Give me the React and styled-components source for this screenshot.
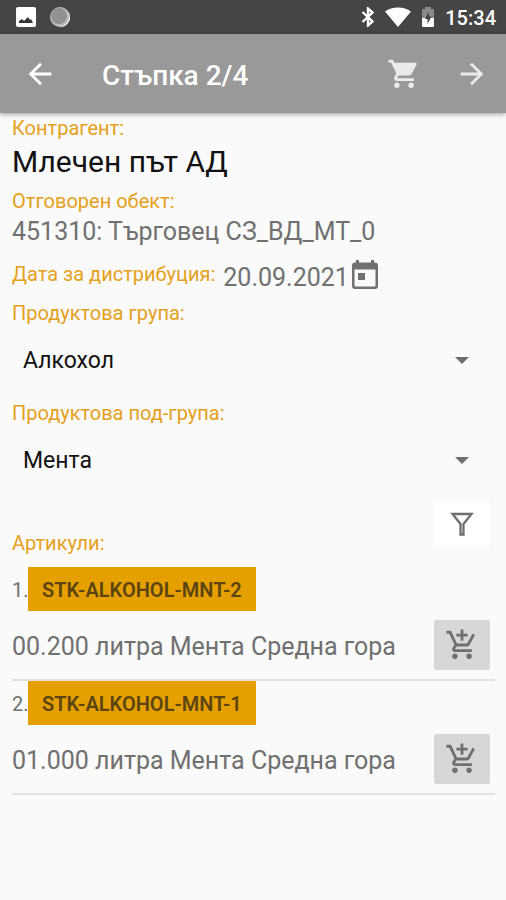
import React, { useState } from "react";
import styled, { createGlobalStyle } from "styled-components";
import {
  MdAddShoppingCart,
  MdArrowBack,
  MdArrowForward,
  MdShoppingCart,
} from "react-icons/md";

const groups = ["Алкохол"];
const subGroups = ["Мента"];

const articles = [
  { code: "STK-ALKOHOL-MNT-2", name: "00.200 литра Мента Средна гора" },
  { code: "STK-ALKOHOL-MNT-1", name: "01.000 литра Мента Средна гора" },
];

const Spinner = ({ id, label, options }) => {
  const [value, setValue] = useState(options[0]);

  return (
    <>
      <Label as="label" htmlFor={id}>
        {label}
      </Label>
      <SelectWrap>
        <Select id={id} value={value} onChange={(e) => setValue(e.target.value)}>
          {options.map((option) => (
            <option key={option}>{option}</option>
          ))}
        </Select>
        <Caret viewBox="0 0 14 7" aria-hidden="true">
          <path d="M0 0h14L7 7z" />
        </Caret>
      </SelectWrap>
    </>
  );
};

const App = () => {
  const [date, setDate] = useState("20.09.2021");

  return (
    <>
      <GlobalStyle />
      <StatusBar>
        <StatusGroup>
          <svg width="20" height="20" viewBox="0 0 20 20">
            <rect width="20" height="20" rx="2" fill="#fff" />
            <path d="M3 16v-2l3-2 2 2 4-4 2 3 1-1 2 4z" fill="#333" />
          </svg>
          <svg width="20" height="20" viewBox="0 0 20 20">
            <circle cx="10" cy="10" r="10" fill="#bdbdbd" />
            <path d="M18 4a10 10 0 0 1-11 15.500A10.500 10.500 0 0 0 18 4z" fill="#fff" />
            <circle cx="9" cy="9" r="8" fill="#929292" />
          </svg>
        </StatusGroup>
        <StatusGroup $tight>
          <svg width="14" height="20" viewBox="0 0 14 20">
            <path
              d="M1.500 5l10 9.500L7 18.500v-17L11.500 5.500l-10 9.500"
              fill="none"
              stroke="#fff"
              strokeWidth="2.400"
            />
          </svg>
          <svg width="26" height="20" viewBox="0 0 26 20">
            <path d="M0 4.500C7-1 19-1 26 4.500L13 20z" fill="#fff" />
          </svg>
          <svg width="14" height="20" viewBox="0 0 14 20">
            <path d="M4 0h6v2h3v9H1V2h3z" fill="#8a8a8a" />
            <path d="M1 11h12v8a1 1 0 0 1-1 1H2a1 1 0 0 1-1-1z" fill="#fff" />
            <path d="M8 4.500L4 12h2.500v5L10.500 9.500H8z" fill="#454545" />
          </svg>
          <Clock>15:34</Clock>
        </StatusGroup>
      </StatusBar>

      <AppBar>
        <BarButton aria-label="Назад">
          <MdArrowBack />
        </BarButton>
        <Title>Стъпка 2/4</Title>
        <BarButton aria-label="Количка" $dim>
          <MdShoppingCart />
        </BarButton>
        <BarButton aria-label="Напред" $dim>
          <MdArrowForward />
        </BarButton>
      </AppBar>

      <Content>
        <Label>Контрагент:</Label>
        <Company>Млечен път АД</Company>
        <Label>Отговорен обект:</Label>
        <Text>451310: Търговец СЗ_ВД_МТ_0</Text>

        <DateRow>
          <Label as="label" htmlFor="date">
            Дата за дистрибуция:
          </Label>
          <DateInput
            id="date"
            value={date}
            onChange={(e) => setDate(e.target.value)}
          />
          <CalendarButton aria-label="Избор на дата">
            <svg width="26" height="29" viewBox="0 0 26 29">
              <path d="M4 0h3v4H4zM19 0h3v4h-3z" />
              <path
                fillRule="evenodd"
                d="M3 2.500h20a3 3 0 0 1 3 3V26a3 3 0 0 1-3 3H3a3 3 0 0 1-3-3V5.500a3 3 0 0 1 3-3zM2.500 9.500v16a1 1 0 0 0 1 1h19a1 1 0 0 0 1-1v-16z"
              />
              <path d="M6 13h7v7H6z" />
            </svg>
          </CalendarButton>
        </DateRow>

        <Spinner id="group" label="Продуктова група:" options={groups} />
        <Spinner id="subgroup" label="Продуктова под-група:" options={subGroups} />

        <ListHeader>
          <Label as="h2">Артикули:</Label>
          <FilterButton aria-label="Филтър">
            <svg width="24" height="24" viewBox="0 0 24 24">
              <path
                d="M2.500 2h19L13.500 12V22.500h-3V12z"
                fill="none"
                stroke="#6e6e6e"
                strokeWidth="2.300"
              />
            </svg>
          </FilterButton>
        </ListHeader>

        <List>
          {articles.map((article, i) => (
            <Item key={article.code}>
              <CodeRow>
                <Index>{i + 1}.</Index>
                <CodeButton>{article.code}</CodeButton>
              </CodeRow>
              <ItemRow>
                <Text>{article.name}</Text>
                <AddButton aria-label="Добави в количката">
                  <MdAddShoppingCart />
                </AddButton>
              </ItemRow>
            </Item>
          ))}
        </List>
      </Content>
    </>
  );
};

const GlobalStyle = createGlobalStyle`
  * {
    box-sizing: border-box;
    margin: 0;
    padding: 0;
  }

  body {
    background: #fafafa;
    color: #707070;
    font-family: Roboto, sans-serif;
  }

  button, input, select {
    border: 0;
    background: none;
    color: inherit;
    font: inherit;
  }

  svg {
    display: block;
    flex: none;
  }
`;

const StatusBar = styled.div`
  display: flex;
  align-items: center;
  justify-content: space-between;
  height: 34px;
  padding: 0 10px 0 16px;
  background: #454545;
`;

const StatusGroup = styled.div`
  display: flex;
  align-items: center;
  gap: ${(props) => (props.$tight ? "10px" : "14px")};
`;

const Clock = styled.span`
  padding-top: 2px;
  color: #fff;
  font-size: 20px;
  font-weight: 500;
`;

const AppBar = styled.header`
  position: relative;
  display: flex;
  align-items: center;
  height: 79px;
  padding: 0 0 0 6px;
  background: #999;
  box-shadow: 0 1px 5px rgba(0, 0, 0, 0.4);
`;

const BarButton = styled.button`
  display: flex;
  align-items: center;
  justify-content: center;
  width: 68px;
  height: 68px;
  color: ${(props) => (props.$dim ? "#ebebeb" : "#fff")};
  font-size: 34px;
`;

const Title = styled.h1`
  flex: 1;
  padding: 4px 0 0 28px;
  color: #fff;
  font-size: 28px;
  font-weight: 500;
`;

const Content = styled.main`
  padding: 3px 11px 0 12px;
`;

const Label = styled.p`
  display: block;
  color: #e5a020;
  font-size: 20px;
  font-weight: 400;
  line-height: 24px;
`;

const Company = styled.p`
  padding-bottom: 5px;
  color: #111;
  font-size: 30px;
  line-height: 44px;
`;

const Text = styled.p`
  font-size: 25px;
  line-height: 38px;
`;

const DateRow = styled.div`
  display: flex;
  align-items: center;
  height: 50px;
  padding-bottom: 4px;
`;

const DateInput = styled.input`
  width: 129px;
  margin-left: 8px;
  padding-top: 6px;
  font-size: 25px;
`;

const CalendarButton = styled.button`
  display: flex;
  fill: currentColor;
`;

const SelectWrap = styled.div`
  position: relative;
  height: 76px;
  padding-top: 13px;
`;

const Select = styled.select`
  appearance: none;
  width: 100%;
  height: 44px;
  padding: 0 50px 0 11px;
  color: #111;
  font-size: 23px;
`;

const Caret = styled.svg`
  position: absolute;
  top: 32px;
  right: 26px;
  width: 14px;
  height: 7px;
  fill: #6e6e6e;
  pointer-events: none;
`;

const ListHeader = styled.div`
  display: flex;
  align-items: flex-end;
  justify-content: space-between;
  padding-right: 5px;
`;

const FilterButton = styled.button`
  display: flex;
  align-items: center;
  justify-content: center;
  width: 56px;
  height: 46px;
  margin-bottom: 8px;
  background: #fff;
`;

const List = styled.ol`
  padding-top: 12px;
  list-style: none;
`;

const Item = styled.li`
  height: 114px;
  border-bottom: 2px solid #e2e2e2;
`;

const CodeRow = styled.div`
  display: flex;
  align-items: center;
`;

const Index = styled.span`
  width: 16px;
  padding-top: 2px;
  font-size: 20px;
`;

const CodeButton = styled.button`
  height: 44px;
  padding: 2px 14px 0;
  background: #e5a000;
  color: #5c4510;
  font-size: 20px;
  font-weight: 600;
`;

const ItemRow = styled.div`
  display: flex;
  align-items: center;
  justify-content: space-between;
  padding: 9px 5px 0 0;

  ${Text} {
    padding-top: 4px;
  }
`;

const AddButton = styled.button`
  display: flex;
  align-items: center;
  justify-content: center;
  width: 56px;
  height: 50px;
  border-radius: 2px;
  background: #d6d8d7;
  font-size: 34px;
`;

export default App;
